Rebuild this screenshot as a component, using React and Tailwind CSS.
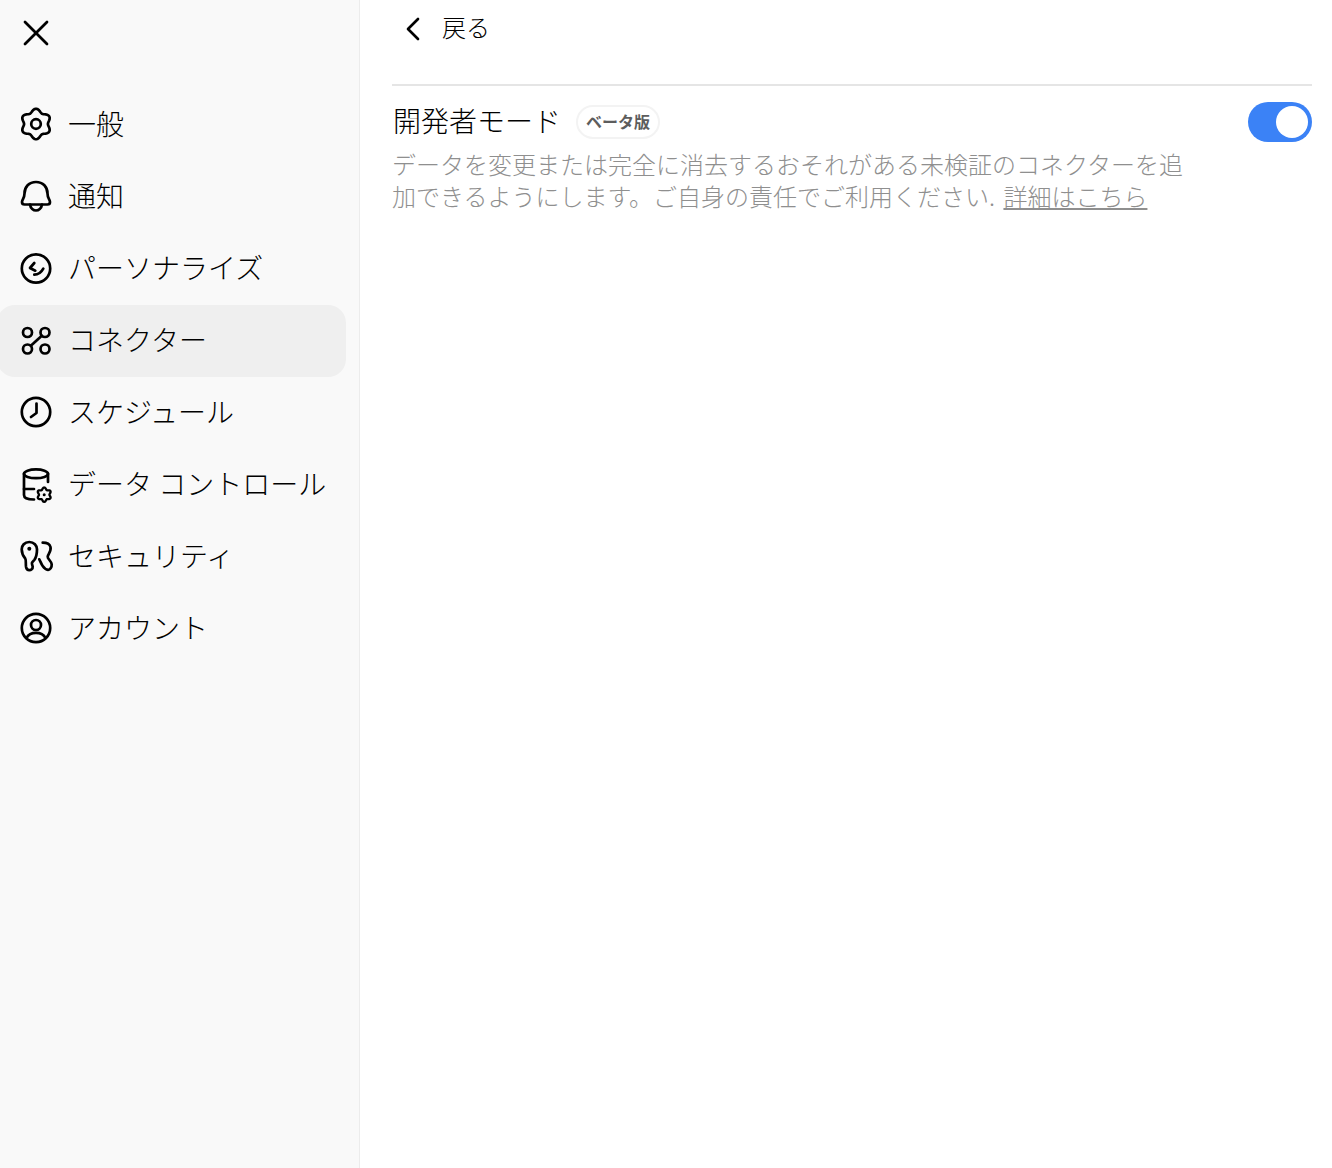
import React from 'react';
import { ChevronLeft, X } from 'lucide-react';

// six lobed outline used by the gear icons
const flower = (cx, cy, r, amp) => {
    const pts = [];
    for (let i = 0; i < 72; i++) {
        const a = (i / 72) * Math.PI * 2;
        const rad = r + amp * Math.cos(6 * a);
        pts.push(`${(cx + rad * Math.sin(a)).toFixed(2)} ${(cy - rad * Math.cos(a)).toFixed(2)}`);
    }
    return `M${pts.join('L')}Z`;
};

const Icon = ({ children }) => (
    <svg width="32" height="32" viewBox="0 0 32 32" fill="none" stroke="currentColor" strokeWidth="2.7" strokeLinecap="round" strokeLinejoin="round" className="shrink-0 overflow-visible">
        {children}
    </svg>
);

const GearIcon = () => (
    <Icon>
        <path d={flower(16, 16, 13.6, 1.7)} />
        <circle cx="16" cy="16" r="4.8" />
    </Icon>
);

const BellIcon = () => (
    <Icon>
        <path d="M16 2C9 2 4.5 7 4.5 13.5C4.5 18 2.2 19.5 2 22C2 23.5 3 24.5 4.5 24.5H27.5C29 24.5 30 23.5 30 22C29.8 19.5 27.5 18 27.5 13.5C27.5 7 23 2 16 2Z" />
        <path d="M10 24.5C10.5 28.5 13.5 30.5 16 30.5C18.5 30.5 21.5 28.5 22 24.5" />
    </Icon>
);

const FaceIcon = () => (
    <Icon>
        <circle cx="16" cy="16.5" r="14.2" />
        <path d="M14.3 11L10 16L15.3 18.7" />
        <path d="M14.3 22.7C17.5 22.7 21 21 23.3 16.7" />
    </Icon>
);

const ConnectorIcon = () => (
    <Icon>
        <circle cx="7.5" cy="8.5" r="4.5" />
        <circle cx="25" cy="8.5" r="4.5" />
        <circle cx="7.5" cy="25" r="4.5" />
        <circle cx="25" cy="25" r="4.5" />
        <path d="M10.8 21.8L21.8 11.8" />
    </Icon>
);

const ClockIcon = () => (
    <Icon>
        <circle cx="16" cy="16" r="14.2" />
        <path d="M16.5 7.5V17L11 21" />
    </Icon>
);

const DataIcon = () => (
    <Icon>
        <ellipse cx="16" cy="5.8" rx="12" ry="4.4" />
        <path d="M4 5.8V27C4 30 8 31.5 14 31.5" />
        <path d="M28 5.8V14" />
        <path d="M4 21H14" />
        <path d={flower(24.2, 26.7, 6.2, 1)} strokeWidth="2.3" />
        <circle cx="24.2" cy="26.7" r="1.5" fill="currentColor" stroke="none" />
    </Icon>
);

const KeysIcon = () => (
    <Icon>
        <path d="M9.3 2C4.5 2 1.7 5.5 1.7 9.3C1.7 13 3.5 16.5 5.3 18.7C6.2 20 5.6 23.5 6 26.7C6.4 29 8 30.2 9.3 30.2C11 30.2 12.9 29 12.7 26.7C12.4 25 11.6 24 12 22.7C12.5 21.5 13.5 21 14.3 20C15.8 18 17 13.5 17 9.3C17 5.5 14 2 9.3 2Z" />
        <circle cx="9.3" cy="8.7" r="2" fill="currentColor" stroke="none" />
        <path d="M22.7 2.7C26 2.7 29.5 3.5 30.5 7C31.5 11 28 14.5 27.7 16.7C27.4 19 31.5 21 31.7 24.3C31.9 27.5 30 30 28 29.8C25.5 29.5 23.7 27.5 22.7 26C21.2 24 20.5 21.5 19.3 19.3" />
    </Icon>
);

const AccountIcon = () => (
    <Icon>
        <circle cx="16" cy="16" r="14.2" />
        <circle cx="16" cy="13" r="5" />
        <path d="M6.5 26C8.5 22 12 20.8 16 20.8C20 20.8 23.5 22 25.5 26" />
    </Icon>
);

const navItems = [
    { label: '一般', icon: GearIcon },
    { label: '通知', icon: BellIcon },
    { label: 'パーソナライズ', icon: FaceIcon },
    { label: 'コネクター', icon: ConnectorIcon, active: true },
    { label: 'スケジュール', icon: ClockIcon },
    { label: 'データ コントロール', icon: DataIcon },
    { label: 'セキュリティ', icon: KeysIcon },
    { label: 'アカウント', icon: AccountIcon },
];

const App = () => {
    return (
        <div className="flex h-[1168px] overflow-hidden bg-white text-black font-light font-['Noto_Sans_CJK_JP','Noto_Sans',sans-serif]">
            <aside className="w-[360px] shrink-0 bg-[#f9f9f9] border-r border-[#ececec]">
                <div className="h-[89px] pl-[14px] pt-[11px]">
                    <X size={44} strokeWidth={1.5} />
                </div>
                <nav className="-ml-[3px] pr-[13px]">
                    {navItems.map(({ label, icon: NavIcon, active }) => (
                        <div
                            key={label}
                            className={`flex items-center gap-[16px] h-[72px] pl-[23px] pb-[2px] rounded-[18px] text-[28px] leading-[36px] whitespace-nowrap ${active ? 'bg-[#efefef]' : ''}`}
                        >
                            <NavIcon />
                            <span className="pb-[2px]">{label}</span>
                        </div>
                    ))}
                </nav>
            </aside>

            <main className="flex-1 pl-[32px] pr-[20px]">
                <div className="flex items-center gap-[9px] h-[56px] pl-[1px] text-[24px]">
                    <ChevronLeft size={40} strokeWidth={1.6} className="mt-[2px]" />
                    <span className="pb-[2px]">戻る</span>
                </div>
                <div className="mt-[28px] h-[2px] bg-[#e5e5e5]" />
                <div className="flex items-start justify-between pt-[16px]">
                    <div className="w-[800px]">
                        <div className="flex items-center gap-[15px] h-[36px]">
                            <h2 className="text-[28px] leading-[36px] font-light pl-[1px]">開発者モード</h2>
                            <span className="flex items-center h-[34px] mt-[4px] px-[8px] pb-[2px] rounded-full border-2 border-[#f3f3f3] text-[16px] font-bold text-[#5d5d5d]">ベータ版</span>
                        </div>
                        <p className="mt-[10px] text-[24px] leading-[32px] text-[#8f8f8f]">
                            データを変更または完全に消去するおそれがある未検証のコネクターを追加できるようにします。ご自身の責任でご利用ください. <a className="ml-[3px] underline">詳細はこちら</a>
                        </p>
                    </div>
                    <div className="flex items-center justify-end w-[64px] h-[40px] pr-[4px] rounded-full bg-[#3b82f6]">
                        <div className="w-[32px] h-[32px] rounded-full bg-white" />
                    </div>
                </div>
            </main>
        </div>
    );
};

export default App;
